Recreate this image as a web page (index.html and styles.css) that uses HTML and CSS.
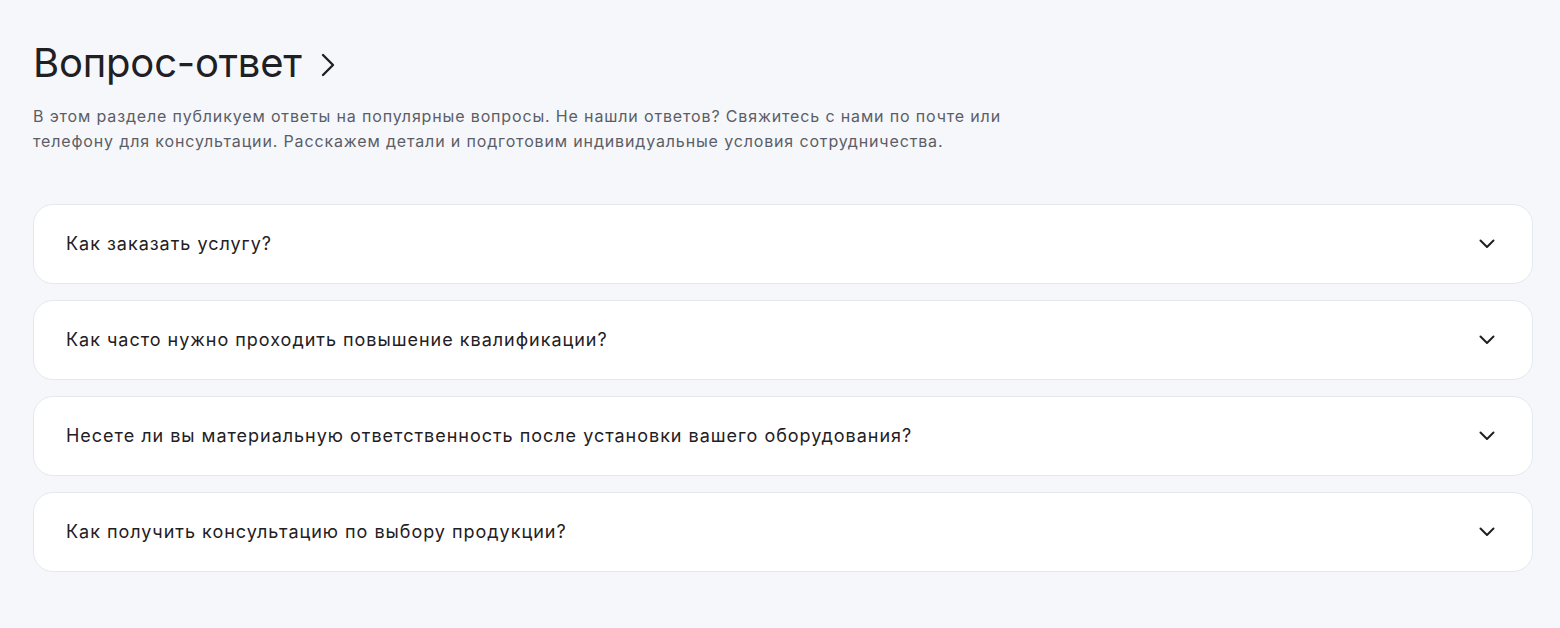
FILE: index.html
```html
<!DOCTYPE html>
<html lang="ru">
<head>
    <meta charset="UTF-8">
    <meta name="viewport" content="width=device-width, initial-scale=1.0">
    <title>Вопрос-ответ</title>
    <link rel="stylesheet" href="styles.css">
</head>
<body>
    <section class="faq">
        <a class="faq-title" href="#">
            <h2>Вопрос-ответ</h2>
            <svg class="faq-title-arrow" width="14" height="24" viewBox="0 0 14 24" fill="none">
                <path d="M2 2l10 10-10 10" stroke="#1f2024" stroke-width="2.4" stroke-linecap="round" stroke-linejoin="round"/>
            </svg>
        </a>
        <p class="faq-intro">
            В этом разделе публикуем ответы на популярные вопросы. Не нашли ответов? Свяжитесь с нами по почте или
            телефону для консультации. Расскажем детали и подготовим индивидуальные условия сотрудничества.
        </p>

        <div class="faq-list">
            <div class="faq-item">
                <span class="faq-question">Как заказать услугу?</span>
                <svg class="faq-chevron" width="16" height="16" viewBox="0 0 16 16" fill="none">
                    <path d="M1.5 4.5L8 11l6.5-6.5" stroke="#1f2024" stroke-width="2" stroke-linecap="round" stroke-linejoin="round"/>
                </svg>
            </div>
            <div class="faq-item">
                <span class="faq-question">Как часто нужно проходить повышение квалификации?</span>
                <svg class="faq-chevron" width="16" height="16" viewBox="0 0 16 16" fill="none">
                    <path d="M1.5 4.5L8 11l6.5-6.5" stroke="#1f2024" stroke-width="2" stroke-linecap="round" stroke-linejoin="round"/>
                </svg>
            </div>
            <div class="faq-item">
                <span class="faq-question">Несете ли вы материальную ответственность после установки вашего оборудования?</span>
                <svg class="faq-chevron" width="16" height="16" viewBox="0 0 16 16" fill="none">
                    <path d="M1.5 4.5L8 11l6.5-6.5" stroke="#1f2024" stroke-width="2" stroke-linecap="round" stroke-linejoin="round"/>
                </svg>
            </div>
            <div class="faq-item">
                <span class="faq-question">Как получить консультацию по выбору продукции?</span>
                <svg class="faq-chevron" width="16" height="16" viewBox="0 0 16 16" fill="none">
                    <path d="M1.5 4.5L8 11l6.5-6.5" stroke="#1f2024" stroke-width="2" stroke-linecap="round" stroke-linejoin="round"/>
                </svg>
            </div>
        </div>
    </section>
</body>
</html>
```

FILE: styles.css
```css
body {
    margin: 0;
    background-color: #f6f7fb;
    font-family: Inter, "Noto Sans", sans-serif;
    color: #1f2024;
}

.faq {
    padding: 38px 27px 40px 33px;
}

/* Heading with arrow link */
.faq-title {
    display: inline-flex;
    align-items: center;
    gap: 19px;
    text-decoration: none;
    color: inherit;
}
.faq-title h2 {
    margin: 0;
    font-size: 40px;
    font-weight: 400;
    line-height: 50px;
    letter-spacing: -0.2px;
}
.faq-title-arrow {
    margin-top: 3px;
}

.faq-intro {
    margin: 16px 0 0;
    max-width: 990px;
    font-size: 16px;
    line-height: 25px;
    letter-spacing: 0.85px;
    color: #5b5e66;
}

/* Accordion */
.faq-list {
    display: flex;
    flex-direction: column;
    gap: 16px;
    margin-top: 50px;
}
.faq-item {
    display: flex;
    align-items: center;
    justify-content: space-between;
    height: 80px;
    box-sizing: border-box;
    padding: 0 37px 0 32px;
    background: #fff;
    border: 1px solid #e6e8ef;
    border-radius: 20px;
    cursor: pointer;
}
.faq-question {
    font-size: 18px;
    line-height: 26px;
    letter-spacing: 0.98px;
}
.faq-chevron {
    flex-shrink: 0;
}
```
